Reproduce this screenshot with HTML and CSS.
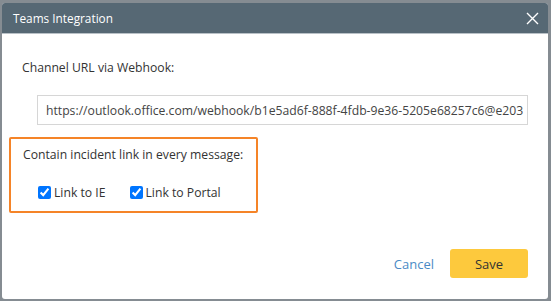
FILE: index.html
```html
<!DOCTYPE html>
<html lang="en">
<head>
    <meta charset="UTF-8">
    <title>Teams Integration</title>
    <link rel="stylesheet" href="styles.css">
</head>
<body>
<div class="dialog">
    <div class="dialog-header">
        <p class="dialog-title">Teams Integration</p>
        <span class="close">
            <svg width="13" height="13" viewBox="0 0 13 13"><path d="M1 1 L12 12 M12 1 L1 12" stroke="#fff" stroke-width="1.4" fill="none"/></svg>
        </span>
    </div>
    <div class="dialog-body">
        <p class="field-label">Channel URL via Webhook:</p>
        <div class="url-box">https://outlook.office.com/webhook/b1e5ad6f-888f-4fdb-9e36-5205e68257c6@e203</div>
        <div class="links-box">
            <p class="field-label">Contain incident link in every message:</p>
            <div class="checks">
                <label class="check"><input type="checkbox" checked> Link to IE</label>
                <label class="check"><input type="checkbox" checked> Link to Portal</label>
            </div>
        </div>
    </div>
    <div class="dialog-footer">
        <a class="cancel" href="#">Cancel</a>
        <button class="save">Save</button>
    </div>
</div>
</body>
</html>
```

FILE: styles.css
```css
:root {
    --header-color: #566874;
    --accent-color: #f58428;
    --save-color: #fdc93d;
    --text-color: #333;
}
body {
    margin: 0;
    padding: 3px 3px 2px 2px;
    background: #858c92;
    font-family: 'Open Sans', sans-serif;
    font-size: 12.2px;
    color: var(--text-color);
}
p {
    margin: 0;
}
.dialog {
    height: 296px;
    background: white;
    border-radius: 3px;
    display: flex;
    flex-direction: column;
    overflow: hidden;
}
.dialog-header {
    height: 31px;
    background: var(--header-color);
    border-bottom: 1px solid #b9c1c7;
    display: flex;
    align-items: center;
    justify-content: space-between;
    padding: 0 9px 0 11px;
    box-sizing: border-box;
}
.dialog-title {
    color: white;
    font-size: 11.8px;
}
.close {
    display: flex;
}
.dialog-body {
    padding: 25px 0 0 7px;
    flex: 1;
}
.field-label {
    padding-left: 13px;
}
.url-box {
    margin: 19px 0 0 28px;
    width: 491px;
    height: 30px;
    box-sizing: border-box;
    border: 1px solid #d6d6d6;
    padding-left: 8px;
    display: flex;
    align-items: center;
    white-space: nowrap;
    overflow: hidden;
    color: #444;
}
.links-box {
    margin-top: 12px;
    width: 249px;
    height: 76px;
    box-sizing: border-box;
    border: 2px solid var(--accent-color);
    border-radius: 2px;
    padding-top: 7px;
}
.links-box .field-label {
    padding-left: 12px;
}
.checks {
    display: flex;
    gap: 24px;
    margin-top: 21px;
    padding-left: 27px;
}
.check {
    display: flex;
    align-items: center;
}
.check input {
    margin: 0 3px 0 0;
    width: 13px;
    height: 13px;
}
.dialog-footer {
    display: flex;
    justify-content: flex-end;
    align-items: center;
    gap: 16px;
    padding: 0 20px 21px 0;
}
.cancel {
    color: #4a8bc6;
    text-decoration: none;
    font-size: 13px;
}
.save {
    width: 78px;
    height: 29px;
    border: none;
    border-radius: 3px;
    background: var(--save-color);
    font-family: 'Open Sans', sans-serif;
    font-size: 13px;
    color: #333;
}
```
